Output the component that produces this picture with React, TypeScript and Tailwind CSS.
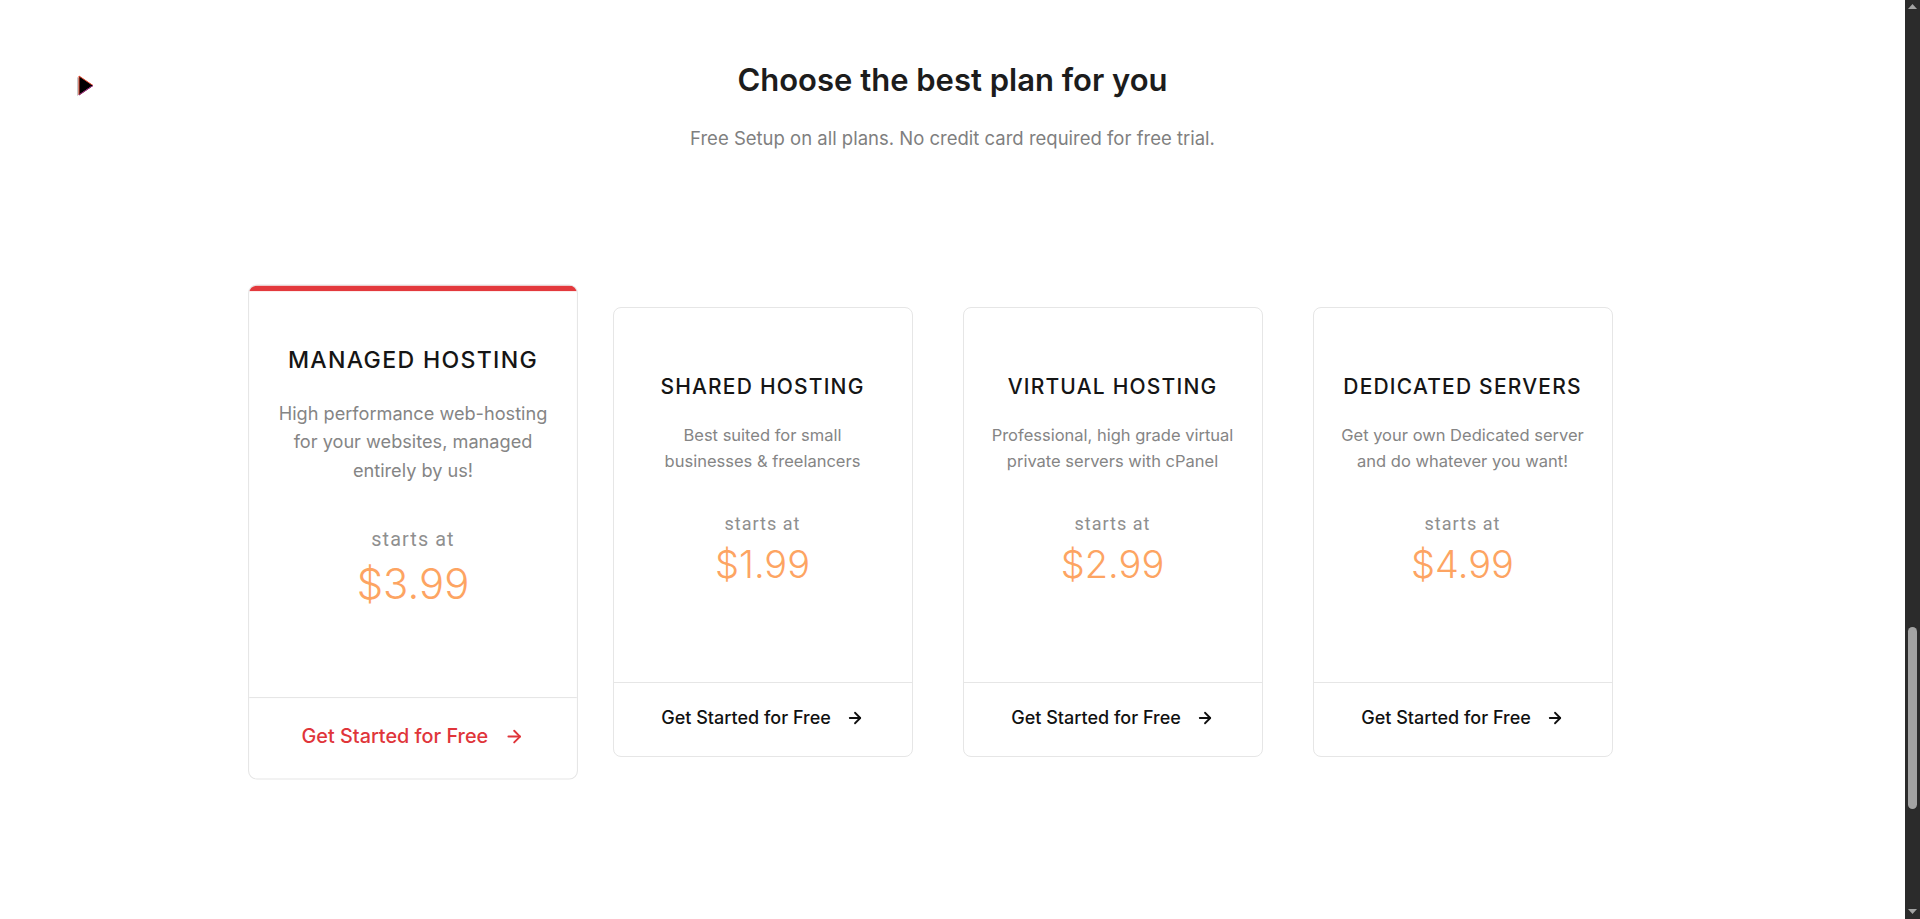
import { ArrowRight } from 'lucide-react'

type Plan = {
  title: string
  lines: string[]
  price: string
  featured?: boolean
}

const plans: Plan[] = [
  {
    title: 'MANAGED HOSTING',
    lines: ['High performance web-hosting', 'for your websites, managed', 'entirely by us!'],
    price: '$3.99',
    featured: true,
  },
  {
    title: 'SHARED HOSTING',
    lines: ['Best suited for small', 'businesses & freelancers'],
    price: '$1.99',
  },
  {
    title: 'VIRTUAL HOSTING',
    lines: ['Professional, high grade virtual', 'private servers with cPanel'],
    price: '$2.99',
  },
  {
    title: 'DEDICATED SERVERS',
    lines: ['Get your own Dedicated server', 'and do whatever you want!'],
    price: '$4.99',
  },
]

function PlanCard({ plan }: { plan: Plan }) {
  return (
    <div
      className={
        plan.featured
          ? 'w-[300px] h-[450px] flex flex-col bg-white border border-[#e6e6e6] rounded-lg overflow-hidden scale-110'
          : 'w-[300px] h-[450px] flex flex-col bg-white border border-[#e6e6e6] rounded-lg overflow-hidden'
      }
    >
      {plan.featured && <div className="h-[5px] bg-[#e3393d] shrink-0" />}
      <div className="flex-1 flex flex-col items-center justify-center px-3 pb-[30px] text-center">
        <h3 className="text-[21px] leading-[26px] font-medium tracking-[1.2px] text-[#151515]">
          {plan.title}
        </h3>
        <p className="mt-[22px] text-[16.5px] leading-[26px] text-[#858585]">
          {plan.lines.map((l) => (
            <span key={l} className="block whitespace-nowrap">{l}</span>
          ))}
        </p>
        <div className="mt-[37px] text-[18px] leading-[26px] tracking-[1px] text-[#8f8f8f] font-['Roboto',sans-serif]">
          starts at
        </div>
        <div className="mt-[4px] text-[38px] leading-[46px] font-light text-[#fda462]">
          {plan.price}
        </div>
      </div>
      <div className="h-[74px] shrink-0 border-t border-[#e6e6e6] pb-[4px] flex items-center justify-center gap-[15px]">
        <span
          className={
            plan.featured
              ? 'text-[18px] font-medium text-[#e0353a]'
              : 'text-[18px] font-medium text-[#111111]'
          }
        >
          Get Started for Free
        </span>
        <ArrowRight
          className={plan.featured ? 'w-[18px] h-[18px] text-[#e0353a]' : 'w-[18px] h-[18px] text-[#111111]'}
          strokeWidth={2.4}
        />
      </div>
    </div>
  )
}

function Scrollbar() {
  return (
    <div className="w-[15px] h-[919px] bg-[#2b2b2b] flex flex-col items-center shrink-0">
      <svg width="9" height="6" viewBox="0 0 9 6" className="mt-[4px]">
        <polygon points="4.5,0 9,5 0,5" fill="#a3a3a3" />
      </svg>
      <div className="mt-[617px] w-[9px] h-[182px] rounded-full bg-[#a3a3a3]" />
      <div className="flex-1" />
      <svg width="9" height="6" viewBox="0 0 9 6" className="mb-[4px]">
        <polygon points="0,0 9,0 4.5,5" fill="#a3a3a3" />
      </svg>
    </div>
  )
}

export default function App() {
  return (
    <div className="flex min-h-[919px] bg-white font-['Inter',sans-serif]">
      <main className="relative flex-1">
        {/* stray cursor overlay */}
        <svg width="22" height="26" viewBox="0 0 22 26" className="absolute left-[74px] top-[72px]">
          <polygon points="3,5 3,24 17,14.5" fill="#c8c8c8" />
          <polygon points="5,4 5,23 19,13.5" fill="#000" stroke="#e2452b" strokeWidth="1" />
          <line x1="5" y1="23" x2="19" y2="13.5" stroke="#7a2a8a" strokeWidth="1" />
        </svg>

        <div className="pt-[61px] text-center">
          <h2 className="text-[31px] leading-[38px] font-semibold text-[#1c1c1c]">
            Choose the best plan for you
          </h2>
          <p className="mt-[26px] text-[18.5px] leading-[26px] text-[#7f7f7f]">
            Free Setup on all plans. No credit card required for free trial.
          </p>
        </div>

        <div className="mx-auto w-[1400px] px-[10px] mt-[156px] flex gap-[50px] items-start">
          {plans.map((p) => (
            <PlanCard key={p.title} plan={p} />
          ))}
        </div>
      </main>
      <Scrollbar />
    </div>
  )
}
